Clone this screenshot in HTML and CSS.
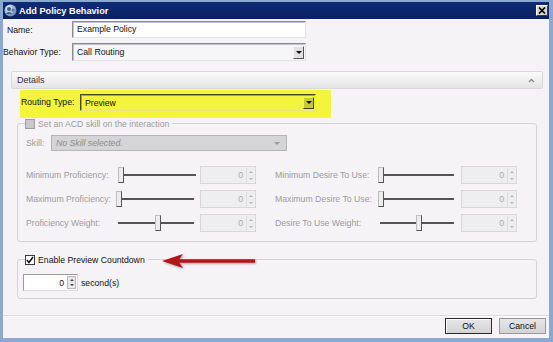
FILE: index.html
```html
<!DOCTYPE html>
<html lang="en">
<head>
    <meta charset="UTF-8">
    <title>Add Policy Behavior</title>
    <link rel="stylesheet" href="styles.css">
</head>
<body>
<div class="window">
    <div class="titlebar">
        <svg class="app-icon" width="13" height="13" viewBox="0 0 13 13">
            <defs>
                <radialGradient id="g" cx="35%" cy="30%" r="70%">
                    <stop offset="0" stop-color="#f2f6fb"/>
                    <stop offset="1" stop-color="#6a86ad"/>
                </radialGradient>
            </defs>
            <circle cx="6.5" cy="6.5" r="6" fill="url(#g)"/>
            <circle cx="5" cy="5" r="2" fill="#3d5d8a"/>
            <path d="M2 10 Q5 6 8 10 Z" fill="#3d5d8a"/>
            <circle cx="9" cy="6" r="1.5" fill="#5b7aa5"/>
        </svg>
        <span class="title">Add Policy Behavior</span>
        <span class="close">
            <svg width="8" height="7" viewBox="0 0 8 7"><path d="M1 0.5 L7 6.5 M7 0.5 L1 6.5" stroke="#000" stroke-width="1.6"/></svg>
        </span>
    </div>

    <div class="client">
        <div class="form-row">
            <label>Name:</label>
            <div class="textbox">Example Policy</div>
        </div>
        <div class="form-row row-gap">
            <label class="wide">Behavior Type:</label>
            <div class="combo">
                <span>Call Routing</span>
                <span class="drop"><i></i></span>
            </div>
        </div>

        <div class="details-header">
            <span>Details</span>
            <svg width="7" height="5" viewBox="0 0 7 5"><path d="M1 4 L3.5 1.5 L6 4" stroke="#8a8a8a" stroke-width="1.3" fill="none"/></svg>
        </div>

        <div class="details">
            <div class="highlight">
                <label>Routing Type:</label>
                <div class="combo routing">
                    <span>Preview</span>
                    <span class="drop"><i></i></span>
                </div>
            </div>

            <fieldset class="group disabled">
                <legend><span class="check"></span>Set an ACD skill on the interaction</legend>
                <div class="skill-row">
                    <label>Skill:</label>
                    <div class="combo off">
                        <span>No Skill selected.</span>
                        <i></i>
                    </div>
                </div>

                <div class="slider-rows">
                    <div class="slider-row">
                        <label class="lbl-left">Minimum Proficiency:</label>
                        <div class="slider s-left first"><span class="thumb" style="left:0%"></span></div>
                        <div class="spin"><span>0</span><span class="arrows"><i class="up"></i><i class="down"></i></span></div>
                        <label class="lbl-right">Minimum Desire To Use:</label>
                        <div class="slider s-right"><span class="thumb" style="left:0%"></span></div>
                        <div class="spin"><span>0</span><span class="arrows"><i class="up"></i><i class="down"></i></span></div>
                    </div>
                    <div class="slider-row">
                        <label class="lbl-left">Maximum Proficiency:</label>
                        <div class="slider s-left"><span class="thumb" style="left:0%"></span></div>
                        <div class="spin"><span>0</span><span class="arrows"><i class="up"></i><i class="down"></i></span></div>
                        <label class="lbl-right">Maximum Desire To Use:</label>
                        <div class="slider s-right"><span class="thumb" style="left:0%"></span></div>
                        <div class="spin"><span>0</span><span class="arrows"><i class="up"></i><i class="down"></i></span></div>
                    </div>
                    <div class="slider-row">
                        <label class="lbl-left">Proficiency Weight:</label>
                        <div class="slider s-left"><span class="thumb" style="left:50%"></span></div>
                        <div class="spin"><span>0</span><span class="arrows"><i class="up"></i><i class="down"></i></span></div>
                        <label class="lbl-right">Desire To Use Weight:</label>
                        <div class="slider s-right"><span class="thumb" style="left:50%"></span></div>
                        <div class="spin"><span>0</span><span class="arrows"><i class="up"></i><i class="down"></i></span></div>
                    </div>
                </div>
            </fieldset>

            <fieldset class="group countdown">
                <legend>
                    <span class="check on">
                        <svg width="8" height="8" viewBox="0 0 8 8"><path d="M1 4 L3 6.5 L7 1" stroke="#111" stroke-width="1.6" fill="none"/></svg>
                    </span>Enable Preview Countdown
                </legend>
                <div class="seconds-row">
                    <div class="number"><span>0</span><span class="arrows"><i class="up"></i><i class="down"></i></span></div>
                    <span>second(s)</span>
                </div>
            </fieldset>
        </div>
    </div>

    <div class="footer">
        <button class="btn default">OK</button>
        <button class="btn">Cancel</button>
    </div>

    <!-- red arrow annotation -->
    <svg class="annotation" width="98" height="18" viewBox="0 0 98 18">
        <path d="M17 9 L94 9" stroke="#b3161a" stroke-width="3.4"/>
        <path d="M1 9 L22 2 L17 9 L22 16 Z" fill="#b3161a"/>
    </svg>
</div>
</body>
</html>
```

FILE: styles.css
```css
* {
    box-sizing: border-box;
}
body {
    margin: 0;
    font-family: "Liberation Sans", Arial, sans-serif;
    font-size: 8.7px;
    color: #111;
    background: #fff;
}
.window {
    position: relative;
    width: 553px;
    height: 342px;
    border-style: solid;
    border-color: #8ba8cf;
    border-width: 2px 4px 4px 3px;
    background: #f5f3f6;
    display: flex;
    flex-direction: column;
}
.titlebar {
    height: 17px;
    flex: none;
    display: flex;
    align-items: center;
    padding: 0 1px;
    background: linear-gradient(#0f2b74, #0a2163);
    color: #fff;
}
.app-icon {
    flex: none;
}
.title {
    margin-left: 2px;
    font-size: 9.2px;
    font-weight: bold;
}
.close {
    margin-left: auto;
    width: 12px;
    height: 11px;
    display: flex;
    align-items: center;
    justify-content: center;
    background: #d6d3ce;
    border: 1px solid;
    border-color: #fff #3c3c3c #3c3c3c #fff;
}

/* top fields */
.client {
    flex: 1;
    padding: 2px 0 0 4px;
}
.form-row {
    display: flex;
    align-items: center;
}
.form-row label {
    width: 65px;
}
.form-row label.wide {
    width: 69px;
    margin-left: -4px;
}
.row-gap {
    margin-top: 5px;
}
.textbox {
    width: 234px;
    height: 17px;
    line-height: 15px;
    padding-left: 4px;
    background: #fff;
    border: 1px solid;
    border-color: #8c8c8c #e3e3e3 #e3e3e3 #8c8c8c;
    box-shadow: inset 1px 1px #c4c4c4;
}
.combo {
    width: 234px;
    height: 18px;
    display: flex;
    align-items: center;
    justify-content: space-between;
    padding: 0 1px 0 4px;
    background: #f6f5f7;
    border: 1px solid;
    border-color: #8c8c8c #e3e3e3 #e3e3e3 #8c8c8c;
    box-shadow: inset 1px 1px #c4c4c4;
}
.drop {
    width: 11px;
    height: 13px;
    display: flex;
    align-items: center;
    justify-content: center;
    background: #e2e0e2;
    border: 1px solid;
    border-color: #f4f4f4 #555 #555 #f4f4f4;
}
.drop i {
    border-left: 3px solid transparent;
    border-right: 3px solid transparent;
    border-top: 3px solid #111;
}

/* details panel */
.details-header {
    margin: 10px 0 0 4px;
    width: 532px;
    height: 18px;
    display: flex;
    align-items: center;
    justify-content: space-between;
    padding: 0 7px 0 5px;
    font-size: 9px;
    color: #333;
    background: linear-gradient(#fbfbfb, #e4e3e5);
    border: 1px solid #d9d8da;
    border-radius: 2px;
}
.details {
    padding-left: 10px;
}
.highlight {
    margin: 1px 0 0 3px;
    width: 311px;
    height: 28px;
    display: flex;
    align-items: flex-start;
    padding: 4px 0 0 1px;
    background: #f4f43c;
}
.highlight label {
    width: 59px;
    line-height: 17px;
}
.combo.routing {
    width: 236px;
    height: 17px;
    background: transparent;
    border-color: #4b4b2a #e6e680 #e6e680 #4b4b2a;
    box-shadow: inset 1px 1px #a6a63a;
}
.routing .drop {
    height: 12px;
    background: #c9c933;
    border-color: #f0f070 #3a3a1a #3a3a1a #f0f070;
}

/* group boxes */
.group {
    margin: 0;
    width: 520px;
    padding: 0 8px 9px 8px;
    border: 1px solid #d4d2d5;
    border-radius: 3px;
}
.group legend {
    display: flex;
    align-items: center;
    height: 11px;
    padding: 0 3px 0 0;
    margin-left: -1px;
}
.check {
    width: 10px;
    height: 10px;
    margin-right: 3px;
    display: flex;
    align-items: center;
    justify-content: center;
    border: 1px solid #9e9e9e;
    background: #c9c8ca;
}
.check.on {
    background: #fff;
    border-color: #3a3a3a;
}
.disabled {
    color: #9c9b9d;
}
.skill-row {
    margin-top: 6px;
    display: flex;
    align-items: center;
}
.skill-row label {
    width: 25px;
}
.combo.off {
    width: 236px;
    height: 16px;
    padding-right: 6px;
    font-style: italic;
    color: #8d8c8e;
    background: #d5d4d6;
    border-color: #b5b4b6;
    box-shadow: none;
}
.combo.off i {
    border-left: 3px solid transparent;
    border-right: 3px solid transparent;
    border-top: 3px solid #9a9a9a;
}

/* sliders */
.slider-rows {
    margin-top: 15px;
    display: flex;
    flex-direction: column;
    gap: 6px;
}
.slider-row {
    display: flex;
    align-items: center;
    height: 18px;
}
.lbl-left {
    width: 90px;
}
.lbl-right {
    width: 103px;
    margin-left: 19px;
}
.slider {
    position: relative;
    height: 18px;
    margin-right: 6px;
}
.slider::before {
    content: "";
    position: absolute;
    left: 2px;
    right: 0;
    top: 8px;
    height: 2px;
    background: #555;
}
.s-left {
    width: 78px;
}
.s-left.first {
    margin-left: 2px;
    margin-right: 4px;
}
.s-right {
    width: 76px;
    margin-right: 7px;
}
.thumb {
    position: absolute;
    top: 1px;
    width: 6px;
    height: 16px;
    background: #ecebed;
    border: 1px solid;
    border-color: #bdbdbd #555 #555 #bdbdbd;
}
.spin {
    width: 56px;
    height: 18px;
    display: flex;
    align-items: center;
    justify-content: flex-end;
    color: #a9a8aa;
    background: #eeedef;
    border: 1px solid #d7d6d8;
}
.spin > span:first-child,
.number > span:first-child {
    padding-right: 3px;
}
.arrows {
    width: 9px;
    height: 14px;
    display: flex;
    flex-direction: column;
    align-items: center;
    justify-content: space-around;
    border-left: 1px solid #dedede;
}
.arrows .up {
    border-left: 2px solid transparent;
    border-right: 2px solid transparent;
    border-bottom: 2px solid #b3b3b3;
}
.arrows .down {
    border-left: 2px solid transparent;
    border-right: 2px solid transparent;
    border-top: 2px solid #b3b3b3;
}

/* countdown */
.countdown {
    margin-top: 12px;
    padding: 0 5px 7px 5px;
}
.countdown legend {
    margin-left: 2px;
}
.seconds-row {
    margin-top: 9px;
    display: flex;
    align-items: center;
    gap: 3px;
}
.number {
    width: 55px;
    height: 17px;
    display: flex;
    align-items: center;
    justify-content: flex-end;
    padding-right: 1px;
    background: #fff;
    border: 1px solid;
    border-color: #9a9a9a #dcdcdc #dcdcdc #9a9a9a;
}
.number .arrows {
    height: 13px;
    background: #e9e8ea;
    border: 1px solid #b9b9b9;
}
.number .arrows .up {
    border-bottom-color: #444;
}
.number .arrows .down {
    border-top-color: #444;
}

/* footer */
.footer {
    height: 23px;
    flex: none;
    display: flex;
    justify-content: flex-end;
    gap: 7px;
    padding: 2px 3px 0 0;
    border-top: 1px solid #dbd9dc;
    box-shadow: inset 0 1px #fff;
}
.btn {
    width: 47px;
    height: 16px;
    padding: 0;
    font-family: "Liberation Sans", Arial, sans-serif;
    font-size: 8.7px;
    color: #111;
    background: linear-gradient(#e6e5e7, #d3d2d4);
    border: 1px solid #9a9a9a;
    border-radius: 0;
}
.btn.default {
    border-color: #2a2a2a;
    box-shadow: inset 1px 1px #fff;
}

.annotation {
    position: absolute;
    left: 158px;
    top: 250px;
    filter: drop-shadow(1px 1px 1px rgba(0, 0, 0, 0.35));
}
```
